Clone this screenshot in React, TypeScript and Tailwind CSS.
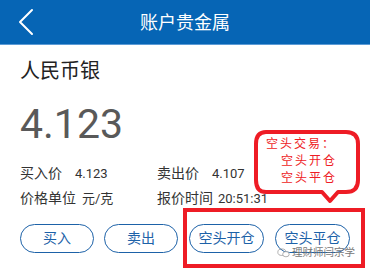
import { ChevronLeft } from 'lucide-react';

const font = { fontFamily: 'Roboto, "Noto Sans CJK SC", sans-serif' };

function Row({ label, value, label2, value2 }: { label: string; value: string; label2: string; value2: string }) {
  return (
    <div className="flex items-center h-[25px]">
      <div className="flex items-center w-[137px]">
        <span className="text-[14px] text-[#333]">{label}</span>
        <span className={`text-[13px] text-[#333] ${label.length > 3 ? 'ml-[6px]' : 'ml-[13px]'}`}>{value}</span>
      </div>
      <div className="flex items-center">
        <span className="text-[14px] text-[#333]">{label2}</span>
        <span className={`text-[13px] text-[#333] ${label2.length > 3 ? 'ml-[5px]' : 'ml-[13px]'}`}>{value2}</span>
      </div>
    </div>
  );
}

function PillButton({ text }: { text: string }) {
  return (
    <button className="w-[75px] h-[29px] rounded-full border border-[#1d62a8] text-[14px] text-[#1d62a8] flex items-center justify-center">
      {text}
    </button>
  );
}

export default function App() {
  return (
    <div className="relative w-[370px] h-[270px] bg-white overflow-hidden" style={font}>
      <div className="h-[44px] bg-[#0665b5] flex items-center relative">
        <ChevronLeft size={48} strokeWidth={1} className="text-white ml-[2px]" />
        <span className="absolute left-0 right-0 text-center text-[18px] text-white">账户贵金属</span>
      </div>
      <div className="h-[1px] bg-[#5c9bd6]" />

      <div className="px-5">
        <div className="text-[20px] text-[#222] mt-[12px] leading-[28px]">人民币银</div>
        <div className="text-[41px] text-[#595959] mt-[19px] leading-[40px]">4.123</div>
        <div className="mt-[17px]">
          <Row label="买入价" value="4.123" label2="卖出价" value2="4.107" />
          <Row label="价格单位" value="元/克" label2="报价时间" value2="20:51:31" />
        </div>
        <div className="flex mt-[13px] gap-[10px]">
          <PillButton text="买入" />
          <PillButton text="卖出" />
          <div className="ml-[1px] flex gap-[11px]">
            <PillButton text="空头开仓" />
            <PillButton text="空头平仓" />
          </div>
        </div>
      </div>

      {/* annotation callout */}
      <svg className="absolute left-[252px] top-[128px]" width="110" height="78" viewBox="0 0 110 78">
        <path
          d="M14 4 H94 Q106 4 106 16 V52 Q106 64 94 64 H86 L78 73 L70 64 H14 Q4 64 4 52 V16 Q4 4 14 4 Z"
          fill="white"
          stroke="#ee1c25"
          strokeWidth="4"
          strokeLinejoin="round"
        />
      </svg>
      <div className="absolute left-[266px] top-[136px] text-[12px] leading-[17px] text-[#ee1c25] tracking-[2px]">
        <div>空头交易：</div>
        <div className="pl-[15px]">空头开仓</div>
        <div className="pl-[15px]">空头平仓</div>
      </div>

      <div className="absolute left-[183px] top-[208px] w-[182px] h-[60px] border-[4px] border-[#ee1c25]" />

      {/* watermark */}
      <div className="absolute left-[277px] top-[246px] flex items-center gap-[2px]">
        <svg width="13" height="10" viewBox="0 0 16 12" fill="none" stroke="#888" strokeWidth="0.8">
          <ellipse cx="6" cy="5" rx="5" ry="4" />
          <ellipse cx="11" cy="7.5" rx="4" ry="3.2" fill="white" />
        </svg>
        <span className="text-[10.5px] leading-[14px] text-[#777]">理财师闫宗学</span>
      </div>
    </div>
  );
}
